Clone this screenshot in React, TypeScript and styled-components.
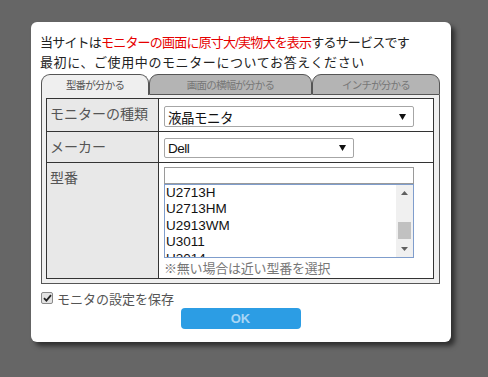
import styled, { createGlobalStyle } from "styled-components";

const GlobalStyle = createGlobalStyle`
  html, body {
    margin: 0;
    padding: 0;
    background: #666;
  }
  body {
    width: 488px;
    height: 377px;
    overflow: hidden;
    font-family: "Liberation Sans", "Noto Sans CJK JP", sans-serif;
  }
`;

const Page = styled.div`
  padding: 22px 0 0 31px;
`;

const Dialog = styled.div`
  box-sizing: border-box;
  width: 420px;
  padding: 11px 11px 13px 10px;
  background: #fff;
  border-radius: 6px;
  box-shadow: 4px 4px 5px rgba(0, 0, 0, 0.55);
`;

const Lead = styled.p<{ $spacing: number }>`
  margin: 0 0 0 -1px;
  font-size: 13px;
  line-height: 20px;
  color: #222;
  letter-spacing: ${p => p.$spacing}px;
  white-space: nowrap;
`;

const Em = styled.span`
  color: #e60000;
`;

const Tabs = styled.div`
  display: flex;
  margin-top: 1px;
`;

const Tab = styled.div<{ $active?: boolean; $width: number }>`
  box-sizing: border-box;
  width: ${p => p.$width}px;
  height: 21px;
  border: 1px solid #555;
  border-bottom: ${p => (p.$active ? "none" : "1px solid #555")};
  border-radius: 9px 9px 0 0;
  background: ${p => (p.$active ? "#efefef" : "#b4b4b4")};
  color: ${p => (p.$active ? "#555" : "#777")};
  font-size: 10.5px;
  letter-spacing: -0.8px;
  line-height: 20px;
  text-align: center;
`;

const Panel = styled.div`
  border: 1px solid #555;
  border-top: none;
  background: #efefef;
  padding: 3px 5px 4px 4px;
`;

const FormGrid = styled.div`
  display: grid;
  grid-template-columns: 111px 1fr;
  grid-template-rows: 32px 30px 115px;
  gap: 1px;
  padding: 1px;
  background: #333;
`;

const Label = styled.div`
  background: #e8e8e8;
  padding: 5px 3px;
  font-size: 14px;
  line-height: 20px;
  color: #555;
`;

const Field = styled.div<{ $top: number }>`
  display: flex;
  flex-direction: column;
  align-items: flex-start;
  background: #fff;
  padding: ${p => p.$top}px 0 0 5px;
`;

const Select = styled.div<{ $width: number; $height: number }>`
  box-sizing: border-box;
  display: flex;
  align-items: center;
  justify-content: space-between;
  width: ${p => p.$width}px;
  height: ${p => p.$height}px;
  padding: 0 7px 0 3px;
  border: 1px solid #a6a6a6;
  border-radius: 2px;
  font-size: 13.5px;
  letter-spacing: -0.5px;
  color: #111;
`;

const TextInput = styled.input`
  box-sizing: border-box;
  width: 250px;
  height: 18px;
  margin: 0;
  padding: 0;
  border: 1px solid #9a9a9a;
  background: #fff;
  outline: none;
`;

const ListBox = styled.div`
  box-sizing: border-box;
  display: flex;
  width: 250px;
  height: 74px;
  border: 1px solid #7f9dcc;
  background: #fff;
`;

const Options = styled.div`
  flex: 1;
  overflow: hidden;
  padding-left: 1px;
  font-size: 13.5px;
  line-height: 16.4px;
  color: #111;
`;

const ScrollBar = styled.div`
  display: flex;
  flex-direction: column;
  width: 17px;
  background: #f0f0f0;
`;

const ScrollButton = styled.div`
  display: flex;
  align-items: center;
  justify-content: center;
  height: 16px;
`;

const ScrollTrack = styled.div`
  flex: 1;
  padding: 0 2px;
`;

const Thumb = styled.div`
  height: 17px;
  background: #c1c1c1;
`;

const Note = styled.div`
  margin-top: 2px;
  font-size: 13px;
  line-height: 18px;
  letter-spacing: -0.2px;
  color: #777;
`;

const CheckRow = styled.label`
  display: flex;
  align-items: center;
  gap: 4px;
  height: 20px;
  margin-top: 4px;
  font-size: 13px;
  color: #555;
`;

const CheckBox = styled.span`
  box-sizing: border-box;
  display: flex;
  align-items: center;
  justify-content: center;
  width: 12px;
  height: 12px;
  border: 1px solid #8a8a8a;
  border-radius: 2px;
  background: #e3e3e3;
`;

const OkButton = styled.button`
  display: block;
  width: 120px;
  height: 21px;
  margin: 0 auto;
  padding: 0;
  border: none;
  border-radius: 4px;
  background: #2c9de4;
  color: #a8d6f5;
  font: bold 13px "Liberation Sans", sans-serif;
`;

const DownArrow = () => (
  <svg width="7" height="6" viewBox="0 0 7 6">
    <polygon points="0,0 7,0 3.5,6" fill="#111" />
  </svg>
);

const ScrollArrow = ({ up }: { up?: boolean }) => (
  <svg width="7" height="4" viewBox="0 0 7 4">
    <polygon points={up ? "0,4 3.5,0 7,4" : "0,0 7,0 3.5,4"} fill="#606060" />
  </svg>
);

const models = ["U2713H", "U2713HM", "U2913WM", "U3011", "U3014"];

const tabs = [
  { label: "型番が分かる", width: 108, active: true },
  { label: "画面の横幅が分かる", width: 163 },
  { label: "インチが分かる", width: 128 },
];

export default function App() {
  return (
    <>
      <GlobalStyle />
      <Page>
        <Dialog>
          <Lead $spacing={-0.8}>
            当サイトは<Em>モニターの画面に原寸大/実物大を表示</Em>するサービスです
          </Lead>
          <Lead $spacing={0.6}>最初に、ご使用中のモニターについてお答えください</Lead>
          <Tabs>
            {tabs.map(t => (
              <Tab key={t.label} $active={t.active} $width={t.width}>
                {t.label}
              </Tab>
            ))}
          </Tabs>
          <Panel>
            <FormGrid>
              <Label>モニターの種類</Label>
              <Field $top={7}>
                <Select $width={250} $height={21}>
                  <span>液晶モニタ</span>
                  <DownArrow />
                </Select>
              </Field>
              <Label>メーカー</Label>
              <Field $top={6}>
                <Select $width={190} $height={20}>
                  <span>Dell</span>
                  <DownArrow />
                </Select>
              </Field>
              <Label>型番</Label>
              <Field $top={4}>
                <TextInput readOnly value="" />
                <ListBox>
                  <Options>
                    {models.map(m => (
                      <div key={m}>{m}</div>
                    ))}
                  </Options>
                  <ScrollBar>
                    <ScrollButton>
                      <ScrollArrow up />
                    </ScrollButton>
                    <ScrollTrack>
                      <Thumb style={{ marginTop: 21 }} />
                    </ScrollTrack>
                    <ScrollButton>
                      <ScrollArrow />
                    </ScrollButton>
                  </ScrollBar>
                </ListBox>
                <Note>※無い場合は近い型番を選択</Note>
              </Field>
            </FormGrid>
          </Panel>
          <CheckRow>
            <CheckBox>
              <svg width="9" height="8" viewBox="0 0 9 8">
                <path d="M1 4.2 L3.4 6.6 L8 1.2" stroke="#222" strokeWidth="1.8" fill="none" />
              </svg>
            </CheckBox>
            モニタの設定を保存
          </CheckRow>
          <OkButton>OK</OkButton>
        </Dialog>
      </Page>
    </>
  );
}
